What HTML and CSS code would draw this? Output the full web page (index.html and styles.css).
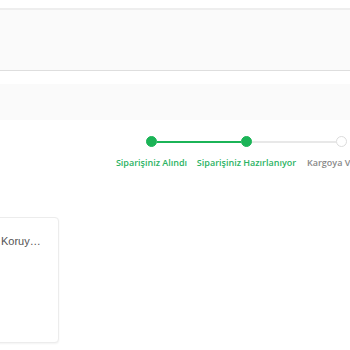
FILE: index.html
```html
<!DOCTYPE html>
<html lang="tr">
<head>
<meta charset="utf-8">
<link rel="stylesheet" href="styles.css">
</head>
<body>
<div class="page">
  <div class="header-band"></div>
  <div class="sub-band"></div>
  <div class="stepper">
    <div class="track">
      <span class="dot done"></span>
      <span class="line done"></span>
      <span class="dot done"></span>
      <span class="line"></span>
      <span class="dot"></span>
    </div>
    <div class="labels">
      <span class="label done">Siparişiniz Alındı</span>
      <span class="label done">Siparişiniz Hazırlanıyor</span>
      <span class="label">Kargoya V</span>
    </div>
  </div>
  <div class="cards">
    <div class="card">
      <p class="card-text">Koruy…</p>
    </div>
  </div>
</div>
</body>
</html>
```
FILE: styles.css
```css
html, body {
  margin: 0;
  padding: 0;
  background: #fff;
  overflow: hidden;
}
.page {
  width: 350px;
  height: 350px;
  overflow: hidden;
  font-family: "Liberation Sans", Arial, sans-serif;
}
.header-band {
  margin-top: 8px;
  height: 60px;
  background: #fafafa;
  border-top: 2px solid #eeeeee;
  border-bottom: 1px solid #dedede;
}
.sub-band {
  margin-top: 13px;
  height: 36px;
  background: #fafafa;
}
.stepper {
  margin-top: 16px;
}
.track {
  display: flex;
  align-items: center;
  padding-left: 146px;
}
.dot {
  flex: none;
  width: 11px;
  height: 11px;
  border-radius: 50%;
  background: #fff;
  border: 1px solid #dcdcdc;
  box-sizing: border-box;
}
.dot.done {
  background: #1bb457;
  border-color: #1bb457;
}
.line {
  flex: none;
  width: 84px;
  height: 2px;
  background: #e8e8e8;
}
.line.done {
  background: #1bb457;
}
.labels {
  display: flex;
  padding-left: 104px;
  margin-top: 10px;
}
.label {
  flex: none;
  width: 95px;
  white-space: nowrap;
  display: flex;
  justify-content: center;
  font-family: "Open Sans", sans-serif;
  font-weight: 600;
  font-size: 9px;
  line-height: 12px;
  color: #888;
}
.label:last-child {
  justify-content: flex-start;
  padding-left: 13px;
  box-sizing: border-box;
}
.label.done {
  color: #2bb363;
}
.cards {
  display: flex;
  margin-top: 48px;
  margin-left: -141px;
}
.card {
  width: 200px;
  height: 126px;
  box-sizing: border-box;
  border: 1px solid #ececec;
  border-radius: 4px;
  box-shadow: 0 1px 2px rgba(0,0,0,0.05);
  background: #fff;
  padding: 16px 0 0 141px;
}
.card-text {
  margin: 0;
  font-size: 11px;
  line-height: 14px;
  color: #555;
  white-space: nowrap;
}
```
